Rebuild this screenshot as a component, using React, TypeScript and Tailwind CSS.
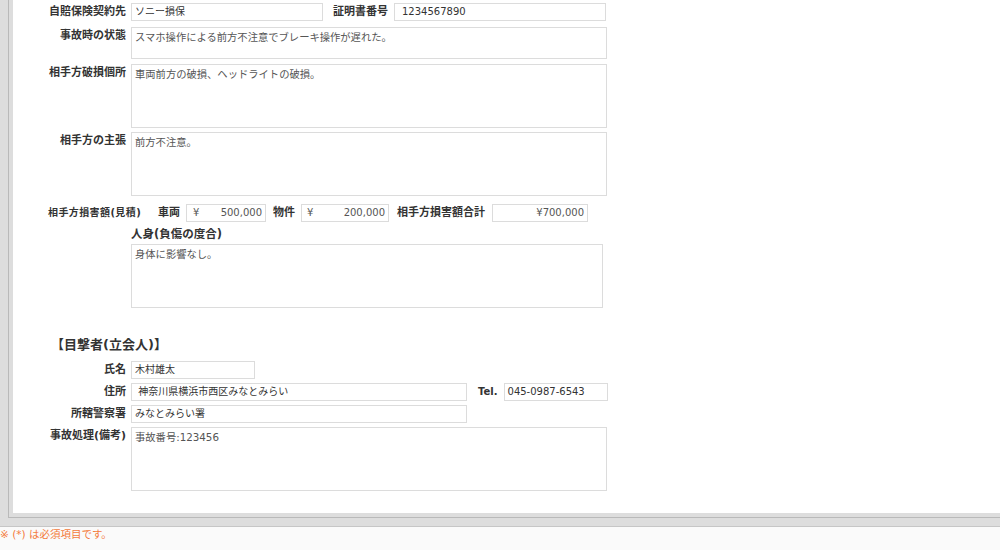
import React from "react";

const Label = ({ children }: { children: React.ReactNode }) => (
  <div className="w-[113px] shrink-0 text-right text-[11px] font-bold leading-[18px] text-[#333]">
    {children}
  </div>
);

export default function App() {
  return (
    <div className="flex h-[550px] w-[1000px] flex-col overflow-hidden bg-[#dddddd] font-['DejaVu_Sans','Noto_Sans_CJK_JP',sans-serif]">
      <div className="h-[526px] shrink-0 pl-[8px] pb-[8px]">
        <div className="h-[518px] border-b border-l border-[#b9b9b9] bg-[#dddddd] pb-[4px] pl-[4px]">
          <div className="flex h-[513px] flex-col bg-white pt-[3px]">
            {/* Row 1 */}
            <div className="flex h-[18px] items-start">
              <Label>自賠保険契約先</Label>
              <div className="ml-[5px] h-[18px] w-[192px] whitespace-pre border border-[#dcdcdc] px-[3px] text-[10px] leading-[16px] text-[#333]">
                ソニー損保
              </div>
              <div className="ml-[10px] text-[11px] font-bold leading-[18px] text-[#333]">証明書番号</div>
              <div className="ml-[6px] h-[18px] w-[212px] whitespace-pre border border-[#dcdcdc] px-[7px] text-[10px] leading-[16px] text-[#333]">
                1234567890
              </div>
            </div>
            {/* Row 2 */}
            <div className="mt-[6px] flex items-start">
              <Label>事故時の状態</Label>
              <div className="ml-[5px] h-[32px] w-[476px] border border-[#dcdcdc] px-[3px] pt-[2px] text-[10.3px] leading-[14px] text-[#555]">
                スマホ操作による前方不注意でブレーキ操作が遅れた。
              </div>
            </div>
            {/* Row 3 */}
            <div className="mt-[5px] flex items-start">
              <Label>相手方破損個所</Label>
              <div className="ml-[5px] h-[64px] w-[476px] border border-[#dcdcdc] px-[3px] pt-[2px] text-[10.3px] leading-[14px] text-[#555]">
                車両前方の破損、ヘッドライトの破損。
              </div>
            </div>
            {/* Row 4 */}
            <div className="mt-[4px] flex items-start">
              <Label>相手方の主張</Label>
              <div className="ml-[5px] h-[64px] w-[476px] border border-[#dcdcdc] px-[3px] pt-[2px] text-[10.3px] leading-[14px] text-[#555]">
                前方不注意。
              </div>
            </div>
            {/* Row 5 */}
            <div className="mt-[8px] flex h-[18px] items-center pl-[35px]">
              <div className="w-[110px] shrink-0 text-[10px] font-bold leading-[18px] tracking-[0.4px] text-[#333]">
                相手方損害額(見積)
              </div>
              <div className="text-[11px] font-bold leading-[18px] text-[#333]">車両</div>
              <div className="ml-[6px] flex h-[18px] w-[80px] items-center justify-between border border-[#dcdcdc] pl-[6px] pr-[3px] text-[10px] leading-[16px] text-[#555]">
                <span>¥</span>
                <span>500,000</span>
              </div>
              <div className="ml-[7px] text-[11px] font-bold leading-[18px] text-[#333]">物件</div>
              <div className="ml-[6px] flex h-[18px] w-[88px] items-center justify-between border border-[#dcdcdc] pl-[5px] pr-[3px] text-[10px] leading-[16px] text-[#555]">
                <span>¥</span>
                <span>200,000</span>
              </div>
              <div className="ml-[8px] text-[11px] font-bold leading-[18px] text-[#333]">相手方損害額合計</div>
              <div className="ml-[7px] flex h-[18px] w-[96px] items-center justify-end border border-[#dcdcdc] pr-[3px] text-[10px] leading-[16px] text-[#555]">
                ¥700,000
              </div>
            </div>
            {/* Row 6 */}
            <div className="mt-[4px] flex flex-col pl-[118px]">
              <div className="text-[11.5px] font-bold leading-[16px] text-[#333]">人身(負傷の度合)</div>
              <div className="mt-[2px] h-[64px] w-[472px] border border-[#dcdcdc] px-[3px] pt-[2px] text-[10.3px] leading-[14px] text-[#555]">
                身体に影響なし。
              </div>
            </div>
            {/* Section header */}
            <div className="mt-[28px] pl-[38px] text-[13px] font-bold leading-[18px] text-[#333]">
              【目撃者(立会人)】
            </div>
            {/* Witness rows */}
            <div className="mt-[7px] flex h-[18px] items-start">
              <Label>氏名</Label>
              <div className="ml-[5px] h-[18px] w-[124px] whitespace-pre border border-[#dcdcdc] px-[3px] text-[10px] leading-[16px] text-[#333]">
                木村雄太
              </div>
            </div>
            <div className="mt-[4px] flex h-[18px] items-start">
              <Label>住所</Label>
              <div className="ml-[5px] h-[18px] w-[336px] whitespace-pre border border-[#dcdcdc] px-[3px] text-[10px] leading-[16px] text-[#333]">
                {" 神奈川県横浜市西区みなとみらい"}
              </div>
              <div className="ml-[11px] text-[10px] font-bold leading-[18px] text-[#333]">Tel.</div>
              <div className="ml-[6px] h-[18px] w-[104px] whitespace-pre border border-[#dcdcdc] px-[3px] text-[10px] leading-[16px] text-[#333]">
                045-0987-6543
              </div>
            </div>
            <div className="mt-[4px] flex h-[18px] items-start">
              <Label>所轄警察署</Label>
              <div className="ml-[5px] h-[18px] w-[336px] whitespace-pre border border-[#dcdcdc] px-[3px] text-[10px] leading-[16px] text-[#333]">
                みなとみらい署
              </div>
            </div>
            <div className="mt-[4px] flex items-start">
              <Label>事故処理(備考)</Label>
              <div className="ml-[5px] h-[64px] w-[476px] border border-[#dcdcdc] px-[3px] pt-[2px] text-[10.3px] leading-[14px] text-[#555]">
                事故番号:123456
              </div>
            </div>
          </div>
        </div>
      </div>
      <div className="flex-1 whitespace-pre border-t border-[#c6c6c6] bg-[#fafafa] text-[10.5px] leading-[14px] text-[#f47a3c]">
        {"※ (*) は必須項目です。"}
      </div>
    </div>
  );
}
